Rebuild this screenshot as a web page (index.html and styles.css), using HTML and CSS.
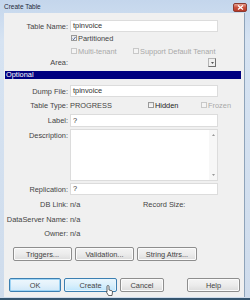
FILE: index.html
```html
<!DOCTYPE html>
<html>
<head>
<meta charset="utf-8">
<link rel="stylesheet" href="styles.css">
</head>
<body>
<div class="window">
  <div class="titlebar">
    <span class="title">Create Table</span>
    <span class="close"><svg width="7" height="5" viewBox="0 0 7 5"><path d="M1 0.5L6 4.5M6 0.5L1 4.5" stroke="#fff" stroke-width="1.3"/></svg></span>
  </div>
  <div class="client">
    <div class="row r-name">
      <label class="lbl">Table Name:</label>
      <div class="input">tpinvoice</div>
    </div>
    <div class="row r-part">
      <span class="lbl"></span>
      <span class="check"><span class="box checked"><svg width="5" height="5" viewBox="0 0 5 5"><path d="M0.6 2.6L1.9 4L4.4 0.6" stroke="#2b4a8a" stroke-width="1" fill="none"/></svg></span>Partitioned</span>
    </div>
    <div class="row r-multi">
      <span class="lbl"></span>
      <span class="check disabled multi"><span class="box"></span>Multi-tenant</span>
      <span class="check disabled"><span class="box"></span>Support Default Tenant</span>
    </div>
    <div class="row r-area">
      <label class="lbl">Area:</label>
      <div class="area"><span class="dropbtn"><svg width="3" height="2" viewBox="0 0 3 2"><path d="M0 0H3L1.5 2Z" fill="#555"/></svg></span></div>
    </div>
    <div class="section">Optional</div>
    <div class="row r-dump">
      <label class="lbl">Dump File:</label>
      <div class="input">tpinvoice</div>
    </div>
    <div class="row r-type">
      <span class="lbl">Table Type:</span>
      <span class="value type">PROGRESS</span>
      <span class="check hidden-chk"><span class="box"></span>Hidden</span>
      <span class="check disabled"><span class="box"></span>Frozen</span>
    </div>
    <div class="row r-label">
      <label class="lbl">Label:</label>
      <div class="input">?</div>
    </div>
    <div class="row r-desc">
      <label class="lbl">Description:</label>
      <div class="textarea">
        <div class="scroll">
          <svg width="3" height="2" viewBox="0 0 3 2"><path d="M0 2H3L1.5 0Z" fill="#999"/></svg>
          <svg width="3" height="2" viewBox="0 0 3 2"><path d="M0 0H3L1.5 2Z" fill="#999"/></svg>
        </div>
      </div>
    </div>
    <div class="row r-repl">
      <label class="lbl">Replication:</label>
      <div class="input">?</div>
    </div>
    <div class="row r-db">
      <span class="lbl">DB Link:</span>
      <span class="value link">n/a</span>
      <span class="value">Record Size:</span>
    </div>
    <div class="row r-ds">
      <span class="lbl">DataServer Name:</span>
      <span class="value">n/a</span>
    </div>
    <div class="row r-owner">
      <span class="lbl">Owner:</span>
      <span class="value">n/a</span>
    </div>
    <div class="btnrow top">
      <span class="btn w59">Triggers...</span>
      <span class="btn w59">Validation...</span>
      <span class="btn w60">String Attrs...</span>
    </div>
    <div class="btnrow bottom">
      <span class="btn default w52">OK</span>
      <span class="btn hover w53">Create<svg class="cursor" width="7" height="11" viewBox="0 0 7 11"><path d="M2 0.5C2.6 0.5 3 0.9 3 1.5V5L6 5.8C6.5 6 6.6 6.4 6.5 7L6 10.5H2.5L0.5 7.2C0.2 6.7 0.6 6.2 1.1 6.4L1 6.6V1.5C1 0.9 1.4 0.5 2 0.5Z" fill="#fff" stroke="#222" stroke-width="0.7"/></svg></span>
      <span class="btn w44">Cancel</span>
      <span class="btn w53 help">Help</span>
    </div>
  </div>
</div>
</body>
</html>
```
FILE: styles.css
```css
* { box-sizing: border-box; }
html, body { margin: 0; padding: 0; }
body {
  width: 250px;
  height: 300px;
  overflow: hidden;
  font-family: "Liberation Sans", Arial, sans-serif;
  font-size: 7.4px;
  color: #444;
  background: #c9d9ec;
}
.window {
  width: 250px;
  height: 300px;
  display: flex;
  flex-direction: column;
  background: linear-gradient(#c4d6ec, #d6e3f2 40px, #cfdcec);
  border-bottom: 2px solid #35556f;
}
.titlebar {
  height: 13px;
  flex: none;
  display: flex;
  align-items: center;
  justify-content: space-between;
  padding: 0 3px 0 4px;
}
.title { font-size: 6.5px; color: #1e2a38; }
.close {
  width: 14px;
  height: 9px;
  margin-top: 1px;
  border-radius: 2px;
  border: 1px solid #8a3a30;
  background: linear-gradient(#e8a293, #c9503d 50%, #b83a27);
  display: flex;
  align-items: center;
  justify-content: center;
}
.client {
  flex: 1;
  margin: 0 5px 1px 4px;
  background: #f0f0f0;
  border-right: 1px solid #8ea3b9;
  display: flex;
  flex-direction: column;
}
.row {
  display: flex;
  align-items: center;
  height: 8px;
  flex: none;
}
.lbl {
  width: 64px;
  flex: none;
  text-align: right;
  margin-right: 2px;
  white-space: nowrap;
  color: #444;
}
.input {
  width: 148px;
  height: 12px;
  background: #fff;
  border: 1px solid #dcdcdc;
  padding-left: 2px;
  line-height: 10px;
  color: #333;
}
.r-name { height: 12px; margin-top: 7px; }
.r-part { margin-top: 2px; }
.r-multi { margin-top: 5px; }
.r-area { height: 9px; margin-top: 3px; }
.r-dump { height: 12px; margin-top: 6px; }
.r-type { margin-top: 4px; }
.r-label { height: 13px; margin-top: 5px; }
.r-label .input { height: 13px; line-height: 11px; }
.r-desc { height: 52px; margin-top: 2px; align-items: flex-start; }
.r-desc .lbl { margin-top: 2px; }
.r-repl { height: 12px; margin-top: 2px; }
.r-db { margin-top: 5px; }
.r-ds { margin-top: 7px; }
.r-owner { margin-top: 6px; }

.check {
  display: flex;
  align-items: center;
  color: #444;
  white-space: nowrap;
}
.check.disabled { color: #a8a8a8; }
.box {
  width: 6px;
  height: 6px;
  border: 1px solid #9a9a9a;
  background: linear-gradient(#e6e6e6, #fafafa);
  margin-right: 1px;
  margin-left: 1px;
  display: flex;
  align-items: center;
  justify-content: center;
}
.check.disabled .box { border-color: #c8c8c8; background: #f4f4f4; }
.multi { width: 62px; flex: none; }
.area {
  width: 148px;
  height: 9px;
  display: flex;
  justify-content: flex-end;
}
.dropbtn {
  width: 8px;
  height: 9px;
  margin-right: 2px;
  border: 1px solid #b5b5b5;
  border-right-color: #707070;
  border-bottom-color: #707070;
  background: #f0f0f0;
  display: flex;
  align-items: center;
  justify-content: center;
}
.section {
  flex: none;
  margin: 4px 3px 0 1px;
  height: 8px;
  background: #000080;
  color: #fff;
  line-height: 8px;
  padding-left: 1px;
}
.value { color: #444; white-space: nowrap; }
.type { width: 77px; flex: none; }
.hidden-chk { width: 53px; flex: none; color: #222; }
.link { width: 73px; flex: none; }
.textarea {
  width: 148px;
  height: 52px;
  background: #fff;
  border: 1px solid #dcdcdc;
  display: flex;
  justify-content: flex-end;
}
.scroll {
  width: 8px;
  height: 100%;
  background: #f7f7f7;
  display: flex;
  flex-direction: column;
  justify-content: space-between;
  align-items: center;
  padding: 4px 0 4px;
}
.btnrow {
  display: flex;
  flex: none;
  gap: 3px;
}
.btnrow.top { margin: 10px 0 0 9px; height: 14px; }
.btnrow.bottom { margin: 17px 0 0 5px; height: 14px; }
.btn {
  height: 14px;
  border: 1px solid #8e8e8e;
  border-radius: 2px;
  background: linear-gradient(#f4f4f4, #ececec 50%, #dcdcdc);
  display: flex;
  align-items: center;
  justify-content: center;
  color: #444;
  position: relative;
  box-shadow: inset 0 0 0 1px #fbfbfb;
}
.w59 { width: 59px; }
.w60 { width: 60px; }
.w52 { width: 52px; }
.w53 { width: 53px; }
.w44 { width: 44px; }
.help { margin-left: 20px; }
.btn.default {
  border-color: #3c7fb1;
  box-shadow: inset 0 0 0 1px #9ed4f5;
  background: linear-gradient(#eef7fd, #e2f1fb 50%, #cfe8f8);
}
.btn.hover {
  border-color: #3c7fb1;
  background: linear-gradient(#eaf6fd, #d9f0fc 50%, #bee6fd);
  box-shadow: inset 0 0 0 1px #e7f5fd;
}
.cursor {
  position: absolute;
  left: 41px;
  top: 6px;
}
```
